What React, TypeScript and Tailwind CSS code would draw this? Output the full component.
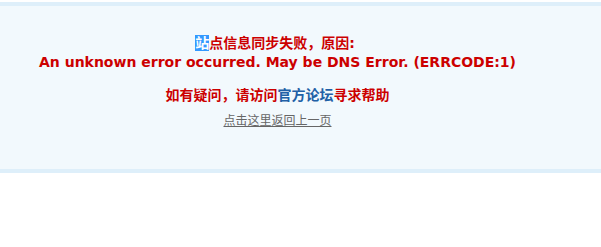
export default function App() {
  return (
    <div className="pt-[2px] font-['DejaVu_Sans','Noto_Sans_CJK_SC',sans-serif]">
      <div className="h-[171px] border-y-4 border-[#deeffa] bg-[#f2f9fd] pr-[46px] text-center">
        <div className="pt-[27px] font-bold text-[#cc0000]">
          <p className="text-[14px] leading-[20px]">
            <span className="bg-[#3399ff] text-white">站</span>点信息同步失败，原因:&nbsp;
          </p>
          <p className="text-[14px] leading-[18px]">
            An unknown error occurred. May be DNS Error. (ERRCODE:1)
          </p>
        </div>
        <p className="mt-[14px] text-[14px] font-bold leading-[20px] text-[#cc0000]">
          如有疑问，请访问
          <a href="#" className="text-[#2160a6]">
            官方论坛
          </a>
          寻求帮助
        </p>
        <p className="mt-[8px] text-[12px] leading-[16px]">
          <a href="#" className="text-[#666666] underline">
            点击这里返回上一页
          </a>
        </p>
      </div>
    </div>
  );
}
